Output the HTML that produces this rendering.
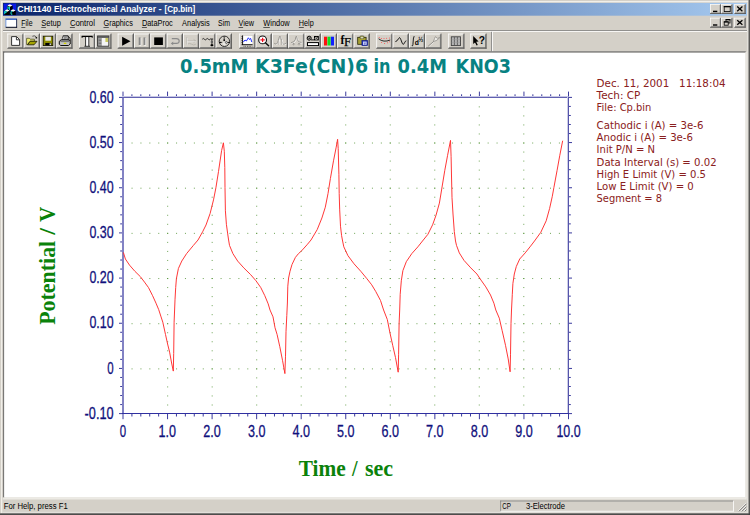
<!DOCTYPE html>
<html><head><meta charset="utf-8"><title>CHI1140 Electrochemical Analyzer - [Cp.bin]</title>
<style>html,body{margin:0;padding:0;background:#d4d0c8;overflow:hidden}svg{display:block}text{white-space:pre}</style>
</head><body>
<svg width="750" height="515" viewBox="0 0 750 515">
<defs>
<linearGradient id="tg" x1="0" y1="0" x2="1" y2="0"><stop offset="0" stop-color="#0a246a"/><stop offset="1" stop-color="#a6caf0"/></linearGradient>
</defs>
<rect x="0.00" y="0.00" width="750.00" height="515.00" fill="#d4d0c8" />
<rect x="1.00" y="1.00" width="747.40" height="1.30" fill="#f1efe9" />
<rect x="1.00" y="1.00" width="1.30" height="512.20" fill="#f1efe9" />
<rect x="746.90" y="2.30" width="1.70" height="510.80" fill="#e2e0da" />
<rect x="2.30" y="511.80" width="746.00" height="1.60" fill="#e2e0da" />
<rect x="748.55" y="0.00" width="0.70" height="515.00" fill="#585858" />
<rect x="0.00" y="513.30" width="750.00" height="0.85" fill="#565656" />
<rect x="749.20" y="0.00" width="0.80" height="515.00" fill="#404040" />
<rect x="0.00" y="514.10" width="750.00" height="0.90" fill="#404040" />
<rect x="3.00" y="2.90" width="744.00" height="12.80" fill="url(#tg)" />
<text x="17.30" y="12.10" font-size="9.5" fill="#ffffff" font-family="'Liberation Sans', sans-serif" font-weight="bold" text-anchor="start" textLength="34.20" lengthAdjust="spacingAndGlyphs" >CHI1140</text>
<text x="54.10" y="12.10" font-size="9.5" fill="#ffffff" font-family="'Liberation Sans', sans-serif" font-weight="bold" text-anchor="start" textLength="63.50" lengthAdjust="spacingAndGlyphs" >Electrochemical</text>
<text x="120.00" y="12.10" font-size="9.5" fill="#ffffff" font-family="'Liberation Sans', sans-serif" font-weight="bold" text-anchor="start" textLength="36.00" lengthAdjust="spacingAndGlyphs" >Analyzer</text>
<text x="158.40" y="12.10" font-size="9.5" fill="#ffffff" font-family="'Liberation Sans', sans-serif" font-weight="bold" text-anchor="start" textLength="3.20" lengthAdjust="spacingAndGlyphs" >-</text>
<text x="164.50" y="12.10" font-size="9.5" fill="#ffffff" font-family="'Liberation Sans', sans-serif" font-weight="bold" text-anchor="start" textLength="30.70" lengthAdjust="spacingAndGlyphs" >[Cp.bin]</text>
<rect x="3.70" y="3.60" width="12.40" height="11.60" fill="#0a1ae6" />
<path d="M9.9 4.4 L12.7 5.8 V9.2 L9.9 10.6 L7.1 9.2 V5.8 Z" fill="#000"/>
<path d="M7 9.4 L9.9 10.8 V15 H4.1 V10.8 Z" fill="#000"/><path d="M13 9.4 L15.9 10.8 V15 H10.1 V10.8 Z" fill="#000"/>
<path d="M9.9 4.2 L12.4 5.5 L9.9 6.8 L7.4 5.5 Z" fill="#fff"/><path d="M7.1 9.3 L9.5 10.5 L7.1 11.7 L4.7 10.5 Z" fill="#fff"/><path d="M13.1 9.3 L15.5 10.5 L13.1 11.7 L10.7 10.5 Z" fill="#fff"/>
<path d="M7.9 6.2 V9.4 M9.5 7 V10 M7.9 7.9 H9.5 M4.7 11 V14.2 M4.7 11.2 H6.2 V12.6 H4.7 M12.4 11.6 H11 V14.2 H12.4" fill="none" stroke="#10e8e0" stroke-width="0.9"/>
<rect x="710.00" y="4.20" width="11.10" height="9.80" fill="#d4d0c8" />
<rect x="710.00" y="4.20" width="11.10" height="0.70" fill="#ffffff" />
<rect x="710.00" y="4.20" width="0.70" height="9.80" fill="#ffffff" />
<rect x="719.70" y="4.90" width="0.70" height="8.40" fill="#808080" />
<rect x="710.70" y="12.60" width="9.70" height="0.70" fill="#808080" />
<rect x="720.40" y="4.20" width="0.70" height="9.80" fill="#404040" />
<rect x="710.00" y="13.30" width="11.10" height="0.70" fill="#404040" />
<rect x="721.10" y="4.20" width="11.30" height="9.80" fill="#d4d0c8" />
<rect x="721.10" y="4.20" width="11.30" height="0.70" fill="#ffffff" />
<rect x="721.10" y="4.20" width="0.70" height="9.80" fill="#ffffff" />
<rect x="731.00" y="4.90" width="0.70" height="8.40" fill="#808080" />
<rect x="721.80" y="12.60" width="9.90" height="0.70" fill="#808080" />
<rect x="731.70" y="4.20" width="0.70" height="9.80" fill="#404040" />
<rect x="721.10" y="13.30" width="11.30" height="0.70" fill="#404040" />
<rect x="734.30" y="4.20" width="11.30" height="9.80" fill="#d4d0c8" />
<rect x="734.30" y="4.20" width="11.30" height="0.70" fill="#ffffff" />
<rect x="734.30" y="4.20" width="0.70" height="9.80" fill="#ffffff" />
<rect x="744.20" y="4.90" width="0.70" height="8.40" fill="#808080" />
<rect x="735.00" y="12.60" width="9.90" height="0.70" fill="#808080" />
<rect x="744.90" y="4.20" width="0.70" height="9.80" fill="#404040" />
<rect x="734.30" y="13.30" width="11.30" height="0.70" fill="#404040" />
<rect x="713.00" y="10.70" width="4.30" height="1.40" fill="#000" />
<line x1="737.20" y1="6.60" x2="742.40" y2="11.20" stroke="#000" stroke-width="1.3" />
<line x1="737.20" y1="11.20" x2="742.40" y2="6.60" stroke="#000" stroke-width="1.3" />
<rect x="710.00" y="17.80" width="11.10" height="9.80" fill="#d4d0c8" />
<rect x="710.00" y="17.80" width="11.10" height="0.70" fill="#ffffff" />
<rect x="710.00" y="17.80" width="0.70" height="9.80" fill="#ffffff" />
<rect x="719.70" y="18.50" width="0.70" height="8.40" fill="#808080" />
<rect x="710.70" y="26.20" width="9.70" height="0.70" fill="#808080" />
<rect x="720.40" y="17.80" width="0.70" height="9.80" fill="#404040" />
<rect x="710.00" y="26.90" width="11.10" height="0.70" fill="#404040" />
<rect x="721.10" y="17.80" width="11.30" height="9.80" fill="#d4d0c8" />
<rect x="721.10" y="17.80" width="11.30" height="0.70" fill="#ffffff" />
<rect x="721.10" y="17.80" width="0.70" height="9.80" fill="#ffffff" />
<rect x="731.00" y="18.50" width="0.70" height="8.40" fill="#808080" />
<rect x="721.80" y="26.20" width="9.90" height="0.70" fill="#808080" />
<rect x="731.70" y="17.80" width="0.70" height="9.80" fill="#404040" />
<rect x="721.10" y="26.90" width="11.30" height="0.70" fill="#404040" />
<rect x="734.30" y="17.80" width="11.30" height="9.80" fill="#d4d0c8" />
<rect x="734.30" y="17.80" width="11.30" height="0.70" fill="#ffffff" />
<rect x="734.30" y="17.80" width="0.70" height="9.80" fill="#ffffff" />
<rect x="744.20" y="18.50" width="0.70" height="8.40" fill="#808080" />
<rect x="735.00" y="26.20" width="9.90" height="0.70" fill="#808080" />
<rect x="744.90" y="17.80" width="0.70" height="9.80" fill="#404040" />
<rect x="734.30" y="26.90" width="11.30" height="0.70" fill="#404040" />
<rect x="713.00" y="24.30" width="4.30" height="1.40" fill="#000" />
<line x1="737.20" y1="20.20" x2="742.40" y2="24.80" stroke="#000" stroke-width="1.3" />
<line x1="737.20" y1="24.80" x2="742.40" y2="20.20" stroke="#000" stroke-width="1.3" />
<rect x="724.2" y="6.4" width="6" height="5.2" fill="none" stroke="#000" stroke-width="0.8"/>
<rect x="723.80" y="6.00" width="6.80" height="1.30" fill="#000" />
<rect x="726" y="19.6" width="4" height="3.4" fill="none" stroke="#000" stroke-width="0.8"/>
<rect x="725.60" y="19.20" width="4.80" height="1.10" fill="#000" />
<rect x="724.2" y="21.8" width="4" height="3.4" fill="#d4d0c8" stroke="#000" stroke-width="0.8"/>
<rect x="723.80" y="21.40" width="4.80" height="1.10" fill="#000" />
<rect x="5.90" y="19.40" width="10.60" height="7.60" fill="#ffffff" />
<rect x="5.50" y="18.50" width="11.50" height="1.30" fill="#1c50c8" />
<rect x="5.50" y="19.60" width="0.80" height="7.60" fill="#5a8ae0" />
<rect x="16.20" y="19.20" width="0.90" height="8.40" fill="#18244a" />
<rect x="5.70" y="26.80" width="11.40" height="1.00" fill="#060c24" />
<text x="21.30" y="25.90" font-size="8.6" fill="#000000" font-family="'Liberation Sans', sans-serif" font-weight="normal" text-anchor="start" textLength="11.20" lengthAdjust="spacingAndGlyphs" >File</text>
<rect x="21.30" y="27.00" width="4.00" height="0.70" fill="#202020" />
<text x="41.30" y="25.90" font-size="8.6" fill="#000000" font-family="'Liberation Sans', sans-serif" font-weight="normal" text-anchor="start" textLength="19.50" lengthAdjust="spacingAndGlyphs" >Setup</text>
<rect x="41.30" y="27.00" width="4.60" height="0.70" fill="#202020" />
<text x="69.90" y="25.90" font-size="8.6" fill="#000000" font-family="'Liberation Sans', sans-serif" font-weight="normal" text-anchor="start" textLength="25.00" lengthAdjust="spacingAndGlyphs" >Control</text>
<rect x="69.90" y="27.00" width="5.00" height="0.70" fill="#202020" />
<text x="103.50" y="25.90" font-size="8.6" fill="#000000" font-family="'Liberation Sans', sans-serif" font-weight="normal" text-anchor="start" textLength="29.30" lengthAdjust="spacingAndGlyphs" >Graphics</text>
<rect x="103.50" y="27.00" width="5.30" height="0.70" fill="#202020" />
<text x="141.90" y="25.90" font-size="8.6" fill="#000000" font-family="'Liberation Sans', sans-serif" font-weight="normal" text-anchor="start" textLength="30.90" lengthAdjust="spacingAndGlyphs" >DataProc</text>
<rect x="141.90" y="27.00" width="5.00" height="0.70" fill="#202020" />
<text x="182.10" y="25.90" font-size="8.6" fill="#000000" font-family="'Liberation Sans', sans-serif" font-weight="normal" text-anchor="start" textLength="27.50" lengthAdjust="spacingAndGlyphs" >Analysis</text>
<text x="218.00" y="25.90" font-size="8.6" fill="#000000" font-family="'Liberation Sans', sans-serif" font-weight="normal" text-anchor="start" textLength="12.00" lengthAdjust="spacingAndGlyphs" >Sim</text>
<text x="238.50" y="25.90" font-size="8.6" fill="#000000" font-family="'Liberation Sans', sans-serif" font-weight="normal" text-anchor="start" textLength="15.50" lengthAdjust="spacingAndGlyphs" >View</text>
<rect x="238.50" y="27.00" width="4.60" height="0.70" fill="#202020" />
<text x="263.30" y="25.90" font-size="8.6" fill="#000000" font-family="'Liberation Sans', sans-serif" font-weight="normal" text-anchor="start" textLength="26.40" lengthAdjust="spacingAndGlyphs" >Window</text>
<rect x="263.30" y="27.00" width="6.50" height="0.70" fill="#202020" />
<text x="298.80" y="25.90" font-size="8.6" fill="#000000" font-family="'Liberation Sans', sans-serif" font-weight="normal" text-anchor="start" textLength="14.90" lengthAdjust="spacingAndGlyphs" >Help</text>
<rect x="298.80" y="27.00" width="5.00" height="0.70" fill="#202020" />
<rect x="3.00" y="30.20" width="744.00" height="0.80" fill="#808080" />
<rect x="3.00" y="31.00" width="744.00" height="0.80" fill="#ffffff" />
<rect x="491.20" y="31.80" width="0.80" height="19.60" fill="#808080" />
<rect x="492.00" y="31.80" width="0.80" height="19.60" fill="#ffffff" />
<rect x="7.40" y="33.60" width="15.40" height="0.80" fill="#ffffff" />
<rect x="7.40" y="33.60" width="0.80" height="14.30" fill="#ffffff" />
<rect x="22.00" y="34.40" width="0.80" height="13.50" fill="#808080" />
<rect x="8.20" y="47.10" width="14.60" height="0.80" fill="#808080" />
<rect x="22.75" y="33.60" width="0.75" height="15.00" fill="#404040" />
<rect x="7.40" y="47.85" width="16.10" height="0.75" fill="#404040" />
<rect x="23.73" y="33.60" width="15.40" height="0.80" fill="#ffffff" />
<rect x="23.73" y="33.60" width="0.80" height="14.30" fill="#ffffff" />
<rect x="38.33" y="34.40" width="0.80" height="13.50" fill="#808080" />
<rect x="24.53" y="47.10" width="14.60" height="0.80" fill="#808080" />
<rect x="39.08" y="33.60" width="0.75" height="15.00" fill="#404040" />
<rect x="23.73" y="47.85" width="16.10" height="0.75" fill="#404040" />
<rect x="40.06" y="33.60" width="15.40" height="0.80" fill="#ffffff" />
<rect x="40.06" y="33.60" width="0.80" height="14.30" fill="#ffffff" />
<rect x="54.66" y="34.40" width="0.80" height="13.50" fill="#808080" />
<rect x="40.86" y="47.10" width="14.60" height="0.80" fill="#808080" />
<rect x="55.41" y="33.60" width="0.75" height="15.00" fill="#404040" />
<rect x="40.06" y="47.85" width="16.10" height="0.75" fill="#404040" />
<rect x="56.39" y="33.60" width="15.40" height="0.80" fill="#ffffff" />
<rect x="56.39" y="33.60" width="0.80" height="14.30" fill="#ffffff" />
<rect x="70.99" y="34.40" width="0.80" height="13.50" fill="#808080" />
<rect x="57.19" y="47.10" width="14.60" height="0.80" fill="#808080" />
<rect x="71.74" y="33.60" width="0.75" height="15.00" fill="#404040" />
<rect x="56.39" y="47.85" width="16.10" height="0.75" fill="#404040" />
<rect x="79.00" y="33.60" width="15.40" height="0.80" fill="#ffffff" />
<rect x="79.00" y="33.60" width="0.80" height="14.30" fill="#ffffff" />
<rect x="93.60" y="34.40" width="0.80" height="13.50" fill="#808080" />
<rect x="79.80" y="47.10" width="14.60" height="0.80" fill="#808080" />
<rect x="94.35" y="33.60" width="0.75" height="15.00" fill="#404040" />
<rect x="79.00" y="47.85" width="16.10" height="0.75" fill="#404040" />
<rect x="95.33" y="33.60" width="15.40" height="0.80" fill="#ffffff" />
<rect x="95.33" y="33.60" width="0.80" height="14.30" fill="#ffffff" />
<rect x="109.93" y="34.40" width="0.80" height="13.50" fill="#808080" />
<rect x="96.13" y="47.10" width="14.60" height="0.80" fill="#808080" />
<rect x="110.68" y="33.60" width="0.75" height="15.00" fill="#404040" />
<rect x="95.33" y="47.85" width="16.10" height="0.75" fill="#404040" />
<rect x="117.70" y="33.60" width="15.40" height="0.80" fill="#ffffff" />
<rect x="117.70" y="33.60" width="0.80" height="14.30" fill="#ffffff" />
<rect x="132.30" y="34.40" width="0.80" height="13.50" fill="#808080" />
<rect x="118.50" y="47.10" width="14.60" height="0.80" fill="#808080" />
<rect x="133.05" y="33.60" width="0.75" height="15.00" fill="#404040" />
<rect x="117.70" y="47.85" width="16.10" height="0.75" fill="#404040" />
<rect x="134.03" y="33.60" width="15.40" height="0.80" fill="#ffffff" />
<rect x="134.03" y="33.60" width="0.80" height="14.30" fill="#ffffff" />
<rect x="148.63" y="34.40" width="0.80" height="13.50" fill="#808080" />
<rect x="134.83" y="47.10" width="14.60" height="0.80" fill="#808080" />
<rect x="149.38" y="33.60" width="0.75" height="15.00" fill="#404040" />
<rect x="134.03" y="47.85" width="16.10" height="0.75" fill="#404040" />
<rect x="150.36" y="33.60" width="15.40" height="0.80" fill="#ffffff" />
<rect x="150.36" y="33.60" width="0.80" height="14.30" fill="#ffffff" />
<rect x="164.96" y="34.40" width="0.80" height="13.50" fill="#808080" />
<rect x="151.16" y="47.10" width="14.60" height="0.80" fill="#808080" />
<rect x="165.71" y="33.60" width="0.75" height="15.00" fill="#404040" />
<rect x="150.36" y="47.85" width="16.10" height="0.75" fill="#404040" />
<rect x="166.69" y="33.60" width="15.40" height="0.80" fill="#ffffff" />
<rect x="166.69" y="33.60" width="0.80" height="14.30" fill="#ffffff" />
<rect x="181.29" y="34.40" width="0.80" height="13.50" fill="#808080" />
<rect x="167.49" y="47.10" width="14.60" height="0.80" fill="#808080" />
<rect x="182.04" y="33.60" width="0.75" height="15.00" fill="#404040" />
<rect x="166.69" y="47.85" width="16.10" height="0.75" fill="#404040" />
<rect x="183.02" y="33.60" width="15.40" height="0.80" fill="#ffffff" />
<rect x="183.02" y="33.60" width="0.80" height="14.30" fill="#ffffff" />
<rect x="197.62" y="34.40" width="0.80" height="13.50" fill="#808080" />
<rect x="183.82" y="47.10" width="14.60" height="0.80" fill="#808080" />
<rect x="198.37" y="33.60" width="0.75" height="15.00" fill="#404040" />
<rect x="183.02" y="47.85" width="16.10" height="0.75" fill="#404040" />
<rect x="199.35" y="33.60" width="15.40" height="0.80" fill="#ffffff" />
<rect x="199.35" y="33.60" width="0.80" height="14.30" fill="#ffffff" />
<rect x="213.95" y="34.40" width="0.80" height="13.50" fill="#808080" />
<rect x="200.15" y="47.10" width="14.60" height="0.80" fill="#808080" />
<rect x="214.70" y="33.60" width="0.75" height="15.00" fill="#404040" />
<rect x="199.35" y="47.85" width="16.10" height="0.75" fill="#404040" />
<rect x="215.68" y="33.60" width="15.40" height="0.80" fill="#ffffff" />
<rect x="215.68" y="33.60" width="0.80" height="14.30" fill="#ffffff" />
<rect x="230.28" y="34.40" width="0.80" height="13.50" fill="#808080" />
<rect x="216.48" y="47.10" width="14.60" height="0.80" fill="#808080" />
<rect x="231.03" y="33.60" width="0.75" height="15.00" fill="#404040" />
<rect x="215.68" y="47.85" width="16.10" height="0.75" fill="#404040" />
<rect x="239.30" y="33.60" width="15.40" height="0.80" fill="#ffffff" />
<rect x="239.30" y="33.60" width="0.80" height="14.30" fill="#ffffff" />
<rect x="253.90" y="34.40" width="0.80" height="13.50" fill="#808080" />
<rect x="240.10" y="47.10" width="14.60" height="0.80" fill="#808080" />
<rect x="254.65" y="33.60" width="0.75" height="15.00" fill="#404040" />
<rect x="239.30" y="47.85" width="16.10" height="0.75" fill="#404040" />
<rect x="255.63" y="33.60" width="15.40" height="0.80" fill="#ffffff" />
<rect x="255.63" y="33.60" width="0.80" height="14.30" fill="#ffffff" />
<rect x="270.23" y="34.40" width="0.80" height="13.50" fill="#808080" />
<rect x="256.43" y="47.10" width="14.60" height="0.80" fill="#808080" />
<rect x="270.98" y="33.60" width="0.75" height="15.00" fill="#404040" />
<rect x="255.63" y="47.85" width="16.10" height="0.75" fill="#404040" />
<rect x="271.96" y="33.60" width="15.40" height="0.80" fill="#ffffff" />
<rect x="271.96" y="33.60" width="0.80" height="14.30" fill="#ffffff" />
<rect x="286.56" y="34.40" width="0.80" height="13.50" fill="#808080" />
<rect x="272.76" y="47.10" width="14.60" height="0.80" fill="#808080" />
<rect x="287.31" y="33.60" width="0.75" height="15.00" fill="#404040" />
<rect x="271.96" y="47.85" width="16.10" height="0.75" fill="#404040" />
<rect x="288.29" y="33.60" width="15.40" height="0.80" fill="#ffffff" />
<rect x="288.29" y="33.60" width="0.80" height="14.30" fill="#ffffff" />
<rect x="302.89" y="34.40" width="0.80" height="13.50" fill="#808080" />
<rect x="289.09" y="47.10" width="14.60" height="0.80" fill="#808080" />
<rect x="303.64" y="33.60" width="0.75" height="15.00" fill="#404040" />
<rect x="288.29" y="47.85" width="16.10" height="0.75" fill="#404040" />
<rect x="304.62" y="33.60" width="15.40" height="0.80" fill="#ffffff" />
<rect x="304.62" y="33.60" width="0.80" height="14.30" fill="#ffffff" />
<rect x="319.22" y="34.40" width="0.80" height="13.50" fill="#808080" />
<rect x="305.42" y="47.10" width="14.60" height="0.80" fill="#808080" />
<rect x="319.97" y="33.60" width="0.75" height="15.00" fill="#404040" />
<rect x="304.62" y="47.85" width="16.10" height="0.75" fill="#404040" />
<rect x="320.95" y="33.60" width="15.40" height="0.80" fill="#ffffff" />
<rect x="320.95" y="33.60" width="0.80" height="14.30" fill="#ffffff" />
<rect x="335.55" y="34.40" width="0.80" height="13.50" fill="#808080" />
<rect x="321.75" y="47.10" width="14.60" height="0.80" fill="#808080" />
<rect x="336.30" y="33.60" width="0.75" height="15.00" fill="#404040" />
<rect x="320.95" y="47.85" width="16.10" height="0.75" fill="#404040" />
<rect x="337.28" y="33.60" width="15.40" height="0.80" fill="#ffffff" />
<rect x="337.28" y="33.60" width="0.80" height="14.30" fill="#ffffff" />
<rect x="351.88" y="34.40" width="0.80" height="13.50" fill="#808080" />
<rect x="338.08" y="47.10" width="14.60" height="0.80" fill="#808080" />
<rect x="352.63" y="33.60" width="0.75" height="15.00" fill="#404040" />
<rect x="337.28" y="47.85" width="16.10" height="0.75" fill="#404040" />
<rect x="353.61" y="33.60" width="15.40" height="0.80" fill="#ffffff" />
<rect x="353.61" y="33.60" width="0.80" height="14.30" fill="#ffffff" />
<rect x="368.21" y="34.40" width="0.80" height="13.50" fill="#808080" />
<rect x="354.41" y="47.10" width="14.60" height="0.80" fill="#808080" />
<rect x="368.96" y="33.60" width="0.75" height="15.00" fill="#404040" />
<rect x="353.61" y="47.85" width="16.10" height="0.75" fill="#404040" />
<rect x="376.30" y="33.60" width="15.40" height="0.80" fill="#ffffff" />
<rect x="376.30" y="33.60" width="0.80" height="14.30" fill="#ffffff" />
<rect x="390.90" y="34.40" width="0.80" height="13.50" fill="#808080" />
<rect x="377.10" y="47.10" width="14.60" height="0.80" fill="#808080" />
<rect x="391.65" y="33.60" width="0.75" height="15.00" fill="#404040" />
<rect x="376.30" y="47.85" width="16.10" height="0.75" fill="#404040" />
<rect x="392.63" y="33.60" width="15.40" height="0.80" fill="#ffffff" />
<rect x="392.63" y="33.60" width="0.80" height="14.30" fill="#ffffff" />
<rect x="407.23" y="34.40" width="0.80" height="13.50" fill="#808080" />
<rect x="393.43" y="47.10" width="14.60" height="0.80" fill="#808080" />
<rect x="407.98" y="33.60" width="0.75" height="15.00" fill="#404040" />
<rect x="392.63" y="47.85" width="16.10" height="0.75" fill="#404040" />
<rect x="408.96" y="33.60" width="15.40" height="0.80" fill="#ffffff" />
<rect x="408.96" y="33.60" width="0.80" height="14.30" fill="#ffffff" />
<rect x="423.56" y="34.40" width="0.80" height="13.50" fill="#808080" />
<rect x="409.76" y="47.10" width="14.60" height="0.80" fill="#808080" />
<rect x="424.31" y="33.60" width="0.75" height="15.00" fill="#404040" />
<rect x="408.96" y="47.85" width="16.10" height="0.75" fill="#404040" />
<rect x="425.29" y="33.60" width="15.40" height="0.80" fill="#ffffff" />
<rect x="425.29" y="33.60" width="0.80" height="14.30" fill="#ffffff" />
<rect x="439.89" y="34.40" width="0.80" height="13.50" fill="#808080" />
<rect x="426.09" y="47.10" width="14.60" height="0.80" fill="#808080" />
<rect x="440.64" y="33.60" width="0.75" height="15.00" fill="#404040" />
<rect x="425.29" y="47.85" width="16.10" height="0.75" fill="#404040" />
<rect x="448.30" y="33.60" width="15.40" height="0.80" fill="#ffffff" />
<rect x="448.30" y="33.60" width="0.80" height="14.30" fill="#ffffff" />
<rect x="462.90" y="34.40" width="0.80" height="13.50" fill="#808080" />
<rect x="449.10" y="47.10" width="14.60" height="0.80" fill="#808080" />
<rect x="463.65" y="33.60" width="0.75" height="15.00" fill="#404040" />
<rect x="448.30" y="47.85" width="16.10" height="0.75" fill="#404040" />
<rect x="470.40" y="33.60" width="15.40" height="0.80" fill="#ffffff" />
<rect x="470.40" y="33.60" width="0.80" height="14.30" fill="#ffffff" />
<rect x="485.00" y="34.40" width="0.80" height="13.50" fill="#808080" />
<rect x="471.20" y="47.10" width="14.60" height="0.80" fill="#808080" />
<rect x="485.75" y="33.60" width="0.75" height="15.00" fill="#404040" />
<rect x="470.40" y="47.85" width="16.10" height="0.75" fill="#404040" />
<path d="M11.6 36.6 H16.6 L19.6 39.6 V45.4 H11.6 Z" fill="#fff" stroke="#202020" stroke-width="0.9" stroke-linejoin="round"/>
<path d="M16.4 36.8 V39.8 H19.4" fill="none" stroke="#202020" stroke-width="0.9"/>
<path d="M26.6 38.3 H29.4 L30.2 39.2 H34.4 V41.2 H30 L27.4 44.6 H26.6 Z" fill="#ecec6c" stroke="#404020" stroke-width="0.7" stroke-linejoin="round"/>
<path d="M27.5 44.8 L30.2 41.3 H37 L34 44.8 Z" fill="#a4a400" stroke="#181800" stroke-width="0.8" stroke-linejoin="round"/>
<path d="M32.4 36.3 Q34.4 35 36.2 36.9" fill="none" stroke="#404040" stroke-width="0.8"/><rect x="35.6" y="37" width="1.5" height="1.5" fill="#101010"/>
<rect x="43.2" y="36.2" width="9.6" height="9.4" fill="#8c8c00" stroke="#101000" stroke-width="0.8"/>
<rect x="45.3" y="36.8" width="5.6" height="3.9" fill="#e8e8ea"/>
<rect x="45.3" y="43" width="6" height="2.3" fill="#000"/><rect x="49.6" y="43.4" width="1.3" height="1.7" fill="#e8e8e8"/>
<path d="M62 39.8 L63.2 35.6 H68 L69 39.8 Z" fill="#8e8e8e" stroke="#303030" stroke-width="0.8" stroke-linejoin="round"/>
<path d="M63 38.8 L63.6 37.4 M66.4 38.4 L67.2 37.6" stroke="#f0f0f0" stroke-width="0.9"/>
<path d="M59.3 41.3 L61 39.9 H68.8 L70.2 41.6 V44 L68.6 45.5 H60.7 L59.3 44.2 Z" fill="#c2c2c2" stroke="#101010" stroke-width="1" stroke-linejoin="round"/>
<path d="M60.4 41.6 H69" stroke="#505050" stroke-width="0.7"/><rect x="63.8" y="42.7" width="2.5" height="1.3" fill="#d4d400"/>
<path d="M68.2 36.2 Q70.8 38 70.4 41.4" fill="none" stroke="#101010" stroke-width="0.9"/>
<rect x="85.6" y="36.8" width="3.2" height="9.4" fill="#fff"/>
<path d="M81.7 36.4 H92.6" stroke="#000" stroke-width="1.3"/><path d="M82.1 36.4 V37.9 M92.2 36.4 V37.9" stroke="#000" stroke-width="0.9"/>
<path d="M85.6 36.8 V46.2 M88.8 36.8 V46.2" stroke="#101010" stroke-width="0.85"/><path d="M84.4 46.3 H90" stroke="#101010" stroke-width="0.8"/>
<rect x="97.6" y="36" width="11.2" height="10.2" fill="#9a9a9a" stroke="#303030" stroke-width="0.9"/>
<rect x="98" y="36.3" width="10.4" height="1.4" fill="#505050"/>
<rect x="101.8" y="38" width="6.4" height="7.6" fill="#f4f4f4"/><rect x="105.4" y="38" width="2.6" height="4" fill="#c8c860"/>
<path d="M98.6 40.2 H101.2 M98.6 43.2 H101.2" stroke="#606060" stroke-width="0.9"/>
<path d="M122.1 36.7 L130.5 41.2 L122.1 45.7 Z" fill="#000"/>
<rect x="139.4" y="38" width="1.9" height="7.6" fill="#fff"/><rect x="144.2" y="38" width="1.9" height="7.6" fill="#fff"/>
<rect x="138.7" y="37.4" width="1.9" height="7.6" fill="#888"/><rect x="143.5" y="37.4" width="1.9" height="7.6" fill="#888"/>
<rect x="154.2" y="37.4" width="8.7" height="7.6" fill="#000"/>
<path d="M171.8 38.6 H176.4 Q179.2 38.6 179.2 41 Q179.2 43.4 176.4 43.4 H172.4" fill="none" stroke="#8a8a8a" stroke-width="1.1"/>
<path d="M170.8 43.4 L173.2 41.6 V45.2 Z" fill="#8a8a8a"/>
<g stroke="#b4b1aa" fill="none" stroke-width="0.8"><path d="M186.6 37.4 V44.6 M186.6 41 H195.6 M193.6 39.4 L195.8 41 L193.6 42.6"/><path d="M187.4 44.2 Q189.5 42.6 191.6 44.2 T195.8 44.2" /></g>
<g stroke="#ffffff" fill="none" stroke-width="0.6" opacity="0.8"><path d="M187.2 38 V45.2 M187.2 41.7 H196.2"/></g>
<path d="M202.3 39.2 Q203.3 37.8 204.3 39.2 T206.3 39.2 T208.3 39.2 T210.2 39 H213.2 M211.9 39 V45.6" fill="none" stroke="#181818" stroke-width="0.9"/>
<rect x="210.8" y="41" width="2.2" height="1.9" fill="#606060"/><rect x="210.5" y="44.2" width="2.8" height="2" rx="0.8" fill="#000"/>
<circle cx="224.4" cy="41.3" r="5.2" fill="none" stroke="#202020" stroke-width="0.9"/>
<circle cx="224.4" cy="43.6" r="1.7" fill="#eceae6"/>
<path d="M224.2 36.2 V40.2 M219.4 42.4 H222.2 M227.3 42.4 H229.6" stroke="#181818" stroke-width="0.8" fill="none"/>
<circle cx="224.2" cy="40.2" r="0.85" fill="#000"/><circle cx="220.1" cy="42.4" r="0.75" fill="#000"/><circle cx="229" cy="42.4" r="0.6" fill="#000"/>
<circle cx="226.3" cy="42.5" r="0.95" fill="#fff" stroke="#101010" stroke-width="0.6"/>
<rect x="242.6" y="35.8" width="9.8" height="8.8" fill="#fff"/>
<path d="M242.6 35.4 V45 M241.6 44.7 H252.6" stroke="#000" stroke-width="0.9"/>
<path d="M241.4 36.6 H242.6 M241.4 38.6 H242.6 M241.4 40.6 H242.6 M241.4 42.6 H242.6" stroke="#000" stroke-width="0.6"/>
<path d="M243.6 46.3 H252.4" stroke="#303030" stroke-width="0.9" stroke-dasharray="0.8 0.9"/>
<path d="M243.4 42 L245 40 L246.4 41 L248.4 37.8 L249.6 39.6 L250.6 38.4 L251.8 42" fill="none" stroke="#2030ff" stroke-width="1"/>
<circle cx="262.6" cy="39.9" r="3.9" fill="#fff" stroke="#101010" stroke-width="1.1"/>
<path d="M260.4 39.9 H264.8 M262.6 37.7 V42.1" stroke="#f01020" stroke-width="1.2"/>
<path d="M265.4 42.8 L268.6 45.8" stroke="#101010" stroke-width="1.5" stroke-linecap="round"/>
<path d="M275 44.1 Q277.6 44.1 278.5 40.2 Q279.4 36.3 279.9 36.3 Q280.5 36.3 281.4 40.2 Q282.3 44.1 285.7 43.6" fill="none" stroke="#ffffff" stroke-width="0.8" transform="translate(0.7,0.6)"/>
<path d="M274.2 43.2 Q275 44.2 276.4 44 Q277.8 43.4 278.5 40.2 Q279.4 36.2 279.9 36.2 Q280.5 36.2 281.4 40.2 Q282.1 43.4 283.6 44 Q285 44.2 285.9 43.3" fill="none" stroke="#8e8b86" stroke-width="0.85"/>
<path d="M278.4 45 V39.6 M281.5 45 V39.6" stroke="#9a9791" stroke-width="0.7"/><path d="M279.1 45 V40 M282.2 45 V40" stroke="#ffffff" stroke-width="0.6"/>
<path d="M291.1 42.6 Q294.6 42.4 295.3 39.6 Q295.9 36.2 296.3 36.2 Q296.7 36.2 297.3 39.6 Q298 42.4 301.6 42.6" fill="none" stroke="#ffffff" stroke-width="0.8" transform="translate(0.7,0.6)"/>
<path d="M291.1 42.6 Q294.6 42.4 295.3 39.6 Q295.9 36.2 296.3 36.2 Q296.7 36.2 297.3 39.6 Q298 42.4 301.6 42.6" fill="none" stroke="#8e8b86" stroke-width="0.85"/>
<path d="M293.6 45.4 V43 M299 45.4 V43 M292.5 44.5 L293.6 43.1 L294.7 44.5 M297.9 44.5 L299 43.1 L300.1 44.5" fill="none" stroke="#96938d" stroke-width="0.75"/>
<circle cx="309.2" cy="38.2" r="2" fill="#b8b5ae" stroke="#000" stroke-width="1"/><circle cx="309.2" cy="38.2" r="0.7" fill="#000"/>
<rect x="314" y="36" width="4.8" height="4.4" fill="#000"/><circle cx="316.3" cy="38.2" r="1.5" fill="#c8c5be"/><circle cx="316.3" cy="38.2" r="0.6" fill="#000"/>
<path d="M311 39.9 H314.2" stroke="#000" stroke-width="0.9"/>
<rect x="307.5" y="42.6" width="11" height="3" fill="#fff" stroke="#000" stroke-width="1"/>
<rect x="324" y="36.7" width="3.2" height="8.8" fill="#ff1010"/><rect x="327.5" y="36.7" width="3.1" height="8.8" fill="#10e020"/><rect x="330.9" y="36.7" width="3.1" height="8.8" fill="#1020ff"/>
<text x="340.5" y="43.8" font-size="11.6" font-weight="bold" fill="#000" font-family="'Liberation Serif', serif">f</text>
<text x="344.1" y="46.2" font-size="12.7" fill="#000" stroke="#000" stroke-width="0.25" font-family="'Liberation Serif', serif">F</text>
<rect x="357.7" y="37.3" width="8.4" height="7" fill="#a6a034" stroke="#282808" stroke-width="0.8"/>
<rect x="360" y="36" width="3.9" height="2.4" rx="0.8" fill="#c0c070" stroke="#404020" stroke-width="0.7"/><rect x="360.8" y="37.4" width="2.4" height="0.9" fill="#f0f0f0"/>
<rect x="361.9" y="40.4" width="5.8" height="5.2" fill="#2434b4" stroke="#101880" stroke-width="0.6"/>
<rect x="363" y="41.6" width="3.6" height="3.2" fill="#e0e4fa"/><path d="M363.6 43 H366 M364.8 43 V44.8" stroke="#3040c0" stroke-width="0.6"/>
<path d="M378.6 38.8 Q383.6 42.8 390.2 40" fill="none" stroke="#181818" stroke-width="0.9"/>
<g fill="#ff4848"><circle cx="379.2" cy="37.4" r="0.5"/><circle cx="381.4" cy="38.4" r="0.5"/><circle cx="384" cy="38.6" r="0.5"/><circle cx="386.6" cy="38.2" r="0.5"/><circle cx="389.4" cy="38" r="0.5"/><circle cx="381.6" cy="42.4" r="0.5"/><circle cx="384.6" cy="43.4" r="0.5"/><circle cx="387.6" cy="42.8" r="0.5"/><circle cx="389.6" cy="41.8" r="0.5"/></g>
<path d="M395.4 41.6 Q397.2 41.4 398.5 38.6 Q399.6 36.2 400.7 39.2 L402.4 43.6 Q403.4 45.6 404.5 42.8 Q405.2 41 406.3 40.8" fill="none" stroke="#101010" stroke-width="0.95"/>
<path d="M414.6 36.9 Q413.6 36 413.5 37.6 L412.9 44.8 Q412.8 46.4 411.8 45.6" fill="none" stroke="#000" stroke-width="0.85"/>
<text x="414.7" y="44.6" font-size="6.8" font-weight="bold" fill="#000" font-family="'Liberation Sans', sans-serif">d</text>
<text x="418.2" y="42" font-size="6.6" font-weight="bold" fill="#000" font-family="'Liberation Sans', sans-serif" textLength="5" lengthAdjust="spacingAndGlyphs">½</text>
<path d="M428.8 46.4 L434.6 41.4" stroke="#ffffff" stroke-width="0.7"/>
<path d="M428.2 46.2 L434 41.2" stroke="#84827c" stroke-width="0.85"/>
<path d="M433.4 41.7 Q434.6 38 435.4 36.7 Q437 39.5 439.8 37.6 Q437.2 40.8 433.4 41.7 Z" fill="#efeeea" stroke="#8c8a84" stroke-width="0.75" stroke-linejoin="round"/>
<rect x="451.3" y="36.8" width="9.2" height="8.8" fill="#b4b4b4" stroke="#404040" stroke-width="0.9"/>
<path d="M454.4 37 V45.4 M457.4 37 V45.4" stroke="#505050" stroke-width="0.8"/><path d="M451.6 39.6 H460.2 M451.6 42.4 H460.2" stroke="#9a9a9a" stroke-width="0.5"/>
<path d="M473.2 36 V44 L475 42.4 L476.6 45.6 L477.8 45 L476.2 41.8 L478.6 41.6 Z" fill="#000"/>
<text x="478.8" y="44.2" font-size="10.2" font-weight="bold" fill="#000" font-family="'Liberation Sans', sans-serif">?</text>
<rect x="2.90" y="51.20" width="742.90" height="0.70" fill="#808080" />
<rect x="2.90" y="51.20" width="0.70" height="446.40" fill="#808080" />
<rect x="3.60" y="51.90" width="742.20" height="0.75" fill="#404040" />
<rect x="3.60" y="51.90" width="0.65" height="445.60" fill="#404040" />
<rect x="4.20" y="52.60" width="741.20" height="444.90" fill="#ffffff" />
<rect x="745.40" y="52.00" width="1.30" height="446.00" fill="#f0eeea" />
<rect x="3.00" y="497.50" width="743.70" height="2.00" fill="#eceae4" />
<text x="3.70" y="509.10" font-size="8.5" fill="#000000" font-family="'Liberation Sans', sans-serif" font-weight="normal" text-anchor="start" textLength="64.00" lengthAdjust="spacingAndGlyphs" >For Help, press F1</text>
<rect x="500.30" y="500.60" width="233.40" height="0.80" fill="#808080" />
<rect x="500.30" y="500.60" width="0.80" height="10.80" fill="#808080" />
<rect x="500.30" y="510.80" width="233.40" height="0.80" fill="#ffffff" />
<rect x="733.00" y="500.60" width="0.80" height="11.00" fill="#ffffff" />
<text x="502.30" y="509.10" font-size="8.5" fill="#000000" font-family="'Liberation Sans', sans-serif" font-weight="normal" text-anchor="start" textLength="8.60" lengthAdjust="spacingAndGlyphs" >CP</text>
<text x="526.00" y="509.10" font-size="8.5" fill="#000000" font-family="'Liberation Sans', sans-serif" font-weight="normal" text-anchor="start" textLength="39.00" lengthAdjust="spacingAndGlyphs" >3-Electrode</text>
<line x1="738.10" y1="511.20" x2="746.20" y2="503.10" stroke="#ffffff" stroke-width="0.8" />
<line x1="738.90" y1="511.30" x2="746.50" y2="503.70" stroke="#7c7c7c" stroke-width="1.0" />
<line x1="741.00" y1="511.20" x2="746.20" y2="506.00" stroke="#ffffff" stroke-width="0.8" />
<line x1="741.80" y1="511.30" x2="746.50" y2="506.60" stroke="#7c7c7c" stroke-width="1.0" />
<line x1="743.90" y1="511.20" x2="746.20" y2="508.90" stroke="#ffffff" stroke-width="0.8" />
<line x1="744.70" y1="511.30" x2="746.50" y2="509.50" stroke="#7c7c7c" stroke-width="1.0" />
<g stroke="#458a25" stroke-width="1" stroke-opacity="0.78" fill="none">
<line x1="131.55" y1="143.02" x2="559.95" y2="143.02" stroke-dasharray="1 7.903"/>
<line x1="131.55" y1="188.19" x2="559.95" y2="188.19" stroke-dasharray="1 7.903"/>
<line x1="131.55" y1="233.36" x2="559.95" y2="233.36" stroke-dasharray="1 7.903"/>
<line x1="131.55" y1="278.54" x2="559.95" y2="278.54" stroke-dasharray="1 7.903"/>
<line x1="131.55" y1="323.71" x2="559.95" y2="323.71" stroke-dasharray="1 7.903"/>
<line x1="131.55" y1="368.88" x2="559.95" y2="368.88" stroke-dasharray="1 7.903"/>
<line x1="167.67" y1="106.38" x2="167.67" y2="405.52" stroke-dasharray="1 8.034"/>
<line x1="212.18" y1="106.38" x2="212.18" y2="405.52" stroke-dasharray="1 8.034"/>
<line x1="256.70" y1="106.38" x2="256.70" y2="405.52" stroke-dasharray="1 8.034"/>
<line x1="301.21" y1="106.38" x2="301.21" y2="405.52" stroke-dasharray="1 8.034"/>
<line x1="345.73" y1="106.38" x2="345.73" y2="405.52" stroke-dasharray="1 8.034"/>
<line x1="390.24" y1="106.38" x2="390.24" y2="405.52" stroke-dasharray="1 8.034"/>
<line x1="434.75" y1="106.38" x2="434.75" y2="405.52" stroke-dasharray="1 8.034"/>
<line x1="479.27" y1="106.38" x2="479.27" y2="405.52" stroke-dasharray="1 8.034"/>
<line x1="523.79" y1="106.38" x2="523.79" y2="405.52" stroke-dasharray="1 8.034"/>
</g>
<g stroke="#101088" stroke-width="1" opacity="0.82">
<line x1="119.00" y1="97.40" x2="122.5" y2="97.40"/>
<line x1="568.5" y1="97.40" x2="572.00" y2="97.40"/>
<line x1="120.20" y1="106.43" x2="122.5" y2="106.43"/>
<line x1="568.5" y1="106.43" x2="570.80" y2="106.43"/>
<line x1="120.20" y1="115.47" x2="122.5" y2="115.47"/>
<line x1="568.5" y1="115.47" x2="570.80" y2="115.47"/>
<line x1="120.20" y1="124.50" x2="122.5" y2="124.50"/>
<line x1="568.5" y1="124.50" x2="570.80" y2="124.50"/>
<line x1="120.20" y1="133.54" x2="122.5" y2="133.54"/>
<line x1="568.5" y1="133.54" x2="570.80" y2="133.54"/>
<line x1="119.00" y1="142.57" x2="122.5" y2="142.57"/>
<line x1="568.5" y1="142.57" x2="572.00" y2="142.57"/>
<line x1="120.20" y1="151.61" x2="122.5" y2="151.61"/>
<line x1="568.5" y1="151.61" x2="570.80" y2="151.61"/>
<line x1="120.20" y1="160.64" x2="122.5" y2="160.64"/>
<line x1="568.5" y1="160.64" x2="570.80" y2="160.64"/>
<line x1="120.20" y1="169.67" x2="122.5" y2="169.67"/>
<line x1="568.5" y1="169.67" x2="570.80" y2="169.67"/>
<line x1="120.20" y1="178.71" x2="122.5" y2="178.71"/>
<line x1="568.5" y1="178.71" x2="570.80" y2="178.71"/>
<line x1="119.00" y1="187.74" x2="122.5" y2="187.74"/>
<line x1="568.5" y1="187.74" x2="572.00" y2="187.74"/>
<line x1="120.20" y1="196.78" x2="122.5" y2="196.78"/>
<line x1="568.5" y1="196.78" x2="570.80" y2="196.78"/>
<line x1="120.20" y1="205.81" x2="122.5" y2="205.81"/>
<line x1="568.5" y1="205.81" x2="570.80" y2="205.81"/>
<line x1="120.20" y1="214.85" x2="122.5" y2="214.85"/>
<line x1="568.5" y1="214.85" x2="570.80" y2="214.85"/>
<line x1="120.20" y1="223.88" x2="122.5" y2="223.88"/>
<line x1="568.5" y1="223.88" x2="570.80" y2="223.88"/>
<line x1="119.00" y1="232.91" x2="122.5" y2="232.91"/>
<line x1="568.5" y1="232.91" x2="572.00" y2="232.91"/>
<line x1="120.20" y1="241.95" x2="122.5" y2="241.95"/>
<line x1="568.5" y1="241.95" x2="570.80" y2="241.95"/>
<line x1="120.20" y1="250.98" x2="122.5" y2="250.98"/>
<line x1="568.5" y1="250.98" x2="570.80" y2="250.98"/>
<line x1="120.20" y1="260.02" x2="122.5" y2="260.02"/>
<line x1="568.5" y1="260.02" x2="570.80" y2="260.02"/>
<line x1="120.20" y1="269.05" x2="122.5" y2="269.05"/>
<line x1="568.5" y1="269.05" x2="570.80" y2="269.05"/>
<line x1="119.00" y1="278.09" x2="122.5" y2="278.09"/>
<line x1="568.5" y1="278.09" x2="572.00" y2="278.09"/>
<line x1="120.20" y1="287.12" x2="122.5" y2="287.12"/>
<line x1="568.5" y1="287.12" x2="570.80" y2="287.12"/>
<line x1="120.20" y1="296.15" x2="122.5" y2="296.15"/>
<line x1="568.5" y1="296.15" x2="570.80" y2="296.15"/>
<line x1="120.20" y1="305.19" x2="122.5" y2="305.19"/>
<line x1="568.5" y1="305.19" x2="570.80" y2="305.19"/>
<line x1="120.20" y1="314.22" x2="122.5" y2="314.22"/>
<line x1="568.5" y1="314.22" x2="570.80" y2="314.22"/>
<line x1="119.00" y1="323.26" x2="122.5" y2="323.26"/>
<line x1="568.5" y1="323.26" x2="572.00" y2="323.26"/>
<line x1="120.20" y1="332.29" x2="122.5" y2="332.29"/>
<line x1="568.5" y1="332.29" x2="570.80" y2="332.29"/>
<line x1="120.20" y1="341.33" x2="122.5" y2="341.33"/>
<line x1="568.5" y1="341.33" x2="570.80" y2="341.33"/>
<line x1="120.20" y1="350.36" x2="122.5" y2="350.36"/>
<line x1="568.5" y1="350.36" x2="570.80" y2="350.36"/>
<line x1="120.20" y1="359.39" x2="122.5" y2="359.39"/>
<line x1="568.5" y1="359.39" x2="570.80" y2="359.39"/>
<line x1="119.00" y1="368.43" x2="122.5" y2="368.43"/>
<line x1="568.5" y1="368.43" x2="572.00" y2="368.43"/>
<line x1="120.20" y1="377.46" x2="122.5" y2="377.46"/>
<line x1="568.5" y1="377.46" x2="570.80" y2="377.46"/>
<line x1="120.20" y1="386.50" x2="122.5" y2="386.50"/>
<line x1="568.5" y1="386.50" x2="570.80" y2="386.50"/>
<line x1="120.20" y1="395.53" x2="122.5" y2="395.53"/>
<line x1="568.5" y1="395.53" x2="570.80" y2="395.53"/>
<line x1="120.20" y1="404.57" x2="122.5" y2="404.57"/>
<line x1="568.5" y1="404.57" x2="570.80" y2="404.57"/>
<line x1="119.00" y1="413.60" x2="122.5" y2="413.60"/>
<line x1="568.5" y1="413.60" x2="572.00" y2="413.60"/>
<line x1="123.00" y1="91.60" x2="123.00" y2="97" />
<line x1="123.00" y1="413.5" x2="123.00" y2="419.20" />
<line x1="131.91" y1="94.30" x2="131.91" y2="97" />
<line x1="131.91" y1="413.5" x2="131.91" y2="416.50" />
<line x1="140.82" y1="94.30" x2="140.82" y2="97" />
<line x1="140.82" y1="413.5" x2="140.82" y2="416.50" />
<line x1="149.73" y1="94.30" x2="149.73" y2="97" />
<line x1="149.73" y1="413.5" x2="149.73" y2="416.50" />
<line x1="158.64" y1="94.30" x2="158.64" y2="97" />
<line x1="158.64" y1="413.5" x2="158.64" y2="416.50" />
<line x1="167.55" y1="91.60" x2="167.55" y2="97" />
<line x1="167.55" y1="413.5" x2="167.55" y2="419.20" />
<line x1="176.46" y1="94.30" x2="176.46" y2="97" />
<line x1="176.46" y1="413.5" x2="176.46" y2="416.50" />
<line x1="185.37" y1="94.30" x2="185.37" y2="97" />
<line x1="185.37" y1="413.5" x2="185.37" y2="416.50" />
<line x1="194.28" y1="94.30" x2="194.28" y2="97" />
<line x1="194.28" y1="413.5" x2="194.28" y2="416.50" />
<line x1="203.19" y1="94.30" x2="203.19" y2="97" />
<line x1="203.19" y1="413.5" x2="203.19" y2="416.50" />
<line x1="212.10" y1="91.60" x2="212.10" y2="97" />
<line x1="212.10" y1="413.5" x2="212.10" y2="419.20" />
<line x1="221.01" y1="94.30" x2="221.01" y2="97" />
<line x1="221.01" y1="413.5" x2="221.01" y2="416.50" />
<line x1="229.92" y1="94.30" x2="229.92" y2="97" />
<line x1="229.92" y1="413.5" x2="229.92" y2="416.50" />
<line x1="238.83" y1="94.30" x2="238.83" y2="97" />
<line x1="238.83" y1="413.5" x2="238.83" y2="416.50" />
<line x1="247.74" y1="94.30" x2="247.74" y2="97" />
<line x1="247.74" y1="413.5" x2="247.74" y2="416.50" />
<line x1="256.65" y1="91.60" x2="256.65" y2="97" />
<line x1="256.65" y1="413.5" x2="256.65" y2="419.20" />
<line x1="265.56" y1="94.30" x2="265.56" y2="97" />
<line x1="265.56" y1="413.5" x2="265.56" y2="416.50" />
<line x1="274.47" y1="94.30" x2="274.47" y2="97" />
<line x1="274.47" y1="413.5" x2="274.47" y2="416.50" />
<line x1="283.38" y1="94.30" x2="283.38" y2="97" />
<line x1="283.38" y1="413.5" x2="283.38" y2="416.50" />
<line x1="292.29" y1="94.30" x2="292.29" y2="97" />
<line x1="292.29" y1="413.5" x2="292.29" y2="416.50" />
<line x1="301.20" y1="91.60" x2="301.20" y2="97" />
<line x1="301.20" y1="413.5" x2="301.20" y2="419.20" />
<line x1="310.11" y1="94.30" x2="310.11" y2="97" />
<line x1="310.11" y1="413.5" x2="310.11" y2="416.50" />
<line x1="319.02" y1="94.30" x2="319.02" y2="97" />
<line x1="319.02" y1="413.5" x2="319.02" y2="416.50" />
<line x1="327.93" y1="94.30" x2="327.93" y2="97" />
<line x1="327.93" y1="413.5" x2="327.93" y2="416.50" />
<line x1="336.84" y1="94.30" x2="336.84" y2="97" />
<line x1="336.84" y1="413.5" x2="336.84" y2="416.50" />
<line x1="345.75" y1="91.60" x2="345.75" y2="97" />
<line x1="345.75" y1="413.5" x2="345.75" y2="419.20" />
<line x1="354.66" y1="94.30" x2="354.66" y2="97" />
<line x1="354.66" y1="413.5" x2="354.66" y2="416.50" />
<line x1="363.57" y1="94.30" x2="363.57" y2="97" />
<line x1="363.57" y1="413.5" x2="363.57" y2="416.50" />
<line x1="372.48" y1="94.30" x2="372.48" y2="97" />
<line x1="372.48" y1="413.5" x2="372.48" y2="416.50" />
<line x1="381.39" y1="94.30" x2="381.39" y2="97" />
<line x1="381.39" y1="413.5" x2="381.39" y2="416.50" />
<line x1="390.30" y1="91.60" x2="390.30" y2="97" />
<line x1="390.30" y1="413.5" x2="390.30" y2="419.20" />
<line x1="399.21" y1="94.30" x2="399.21" y2="97" />
<line x1="399.21" y1="413.5" x2="399.21" y2="416.50" />
<line x1="408.12" y1="94.30" x2="408.12" y2="97" />
<line x1="408.12" y1="413.5" x2="408.12" y2="416.50" />
<line x1="417.03" y1="94.30" x2="417.03" y2="97" />
<line x1="417.03" y1="413.5" x2="417.03" y2="416.50" />
<line x1="425.94" y1="94.30" x2="425.94" y2="97" />
<line x1="425.94" y1="413.5" x2="425.94" y2="416.50" />
<line x1="434.85" y1="91.60" x2="434.85" y2="97" />
<line x1="434.85" y1="413.5" x2="434.85" y2="419.20" />
<line x1="443.76" y1="94.30" x2="443.76" y2="97" />
<line x1="443.76" y1="413.5" x2="443.76" y2="416.50" />
<line x1="452.67" y1="94.30" x2="452.67" y2="97" />
<line x1="452.67" y1="413.5" x2="452.67" y2="416.50" />
<line x1="461.58" y1="94.30" x2="461.58" y2="97" />
<line x1="461.58" y1="413.5" x2="461.58" y2="416.50" />
<line x1="470.49" y1="94.30" x2="470.49" y2="97" />
<line x1="470.49" y1="413.5" x2="470.49" y2="416.50" />
<line x1="479.40" y1="91.60" x2="479.40" y2="97" />
<line x1="479.40" y1="413.5" x2="479.40" y2="419.20" />
<line x1="488.31" y1="94.30" x2="488.31" y2="97" />
<line x1="488.31" y1="413.5" x2="488.31" y2="416.50" />
<line x1="497.22" y1="94.30" x2="497.22" y2="97" />
<line x1="497.22" y1="413.5" x2="497.22" y2="416.50" />
<line x1="506.13" y1="94.30" x2="506.13" y2="97" />
<line x1="506.13" y1="413.5" x2="506.13" y2="416.50" />
<line x1="515.04" y1="94.30" x2="515.04" y2="97" />
<line x1="515.04" y1="413.5" x2="515.04" y2="416.50" />
<line x1="523.95" y1="91.60" x2="523.95" y2="97" />
<line x1="523.95" y1="413.5" x2="523.95" y2="419.20" />
<line x1="532.86" y1="94.30" x2="532.86" y2="97" />
<line x1="532.86" y1="413.5" x2="532.86" y2="416.50" />
<line x1="541.77" y1="94.30" x2="541.77" y2="97" />
<line x1="541.77" y1="413.5" x2="541.77" y2="416.50" />
<line x1="550.68" y1="94.30" x2="550.68" y2="97" />
<line x1="550.68" y1="413.5" x2="550.68" y2="416.50" />
<line x1="559.59" y1="94.30" x2="559.59" y2="97" />
<line x1="559.59" y1="413.5" x2="559.59" y2="416.50" />
<line x1="568.50" y1="91.60" x2="568.50" y2="97" />
<line x1="568.50" y1="413.5" x2="568.50" y2="419.20" />
</g>
<rect x="122" y="96.5" width="2" height="317.5" fill="#8282c4"/>
<rect x="122" y="96" width="447" height="1" fill="#c6c6e4"/>
<rect x="122" y="97" width="447" height="1" fill="#6060b0"/>
<rect x="567" y="96.5" width="1" height="317.5" fill="#cccce8"/>
<rect x="568" y="96.5" width="1" height="317.5" fill="#5555aa"/>
<rect x="122" y="413" width="447" height="1" fill="#3030a0"/>
<polyline points="123.5,252.8 125.4,259.0 129.5,265.1 134.9,271.3 140.4,276.7 144.5,282.1 148.5,287.6 152.6,295.7 156.0,303.2 158.7,309.6 160.8,316.1 162.8,322.2 165.5,334.5 167.6,344.0 169.6,352.1 171.6,363.0 173.3,371.1 173.7,353.5 174.1,322.2 174.6,310.0 175.0,299.8 175.7,287.6 176.4,278.7 178.4,268.5 181.8,261.0 186.6,253.6 193.4,245.4 198.0,240.0 202.6,231.8 206.0,225.0 210.1,213.5 213.5,199.9 215.9,187.8 218.5,171.5 221.6,150.6 223.4,142.8 224.3,151.3 224.8,167.6 225.0,187.7 225.4,210.8 226.4,224.3 227.7,233.9 228.6,240.0 229.5,245.4 232.9,253.6 237.7,261.1 243.8,267.9 250.6,274.6 256.0,280.8 260.8,287.6 264.8,295.7 268.2,303.9 270.0,310.0 273.0,316.8 275.0,327.7 277.1,334.5 279.8,346.7 282.5,360.3 284.9,373.6 285.5,356.2 286.0,331.7 286.8,315.4 287.4,303.0 287.8,286.2 288.6,278.0 290.0,271.3 292.0,264.5 295.4,257.4 298.4,253.7 301.5,250.9 307.0,244.8 311.0,240.0 317.2,229.6 321.9,218.0 325.3,207.2 328.0,193.6 330.4,178.5 333.5,160.8 336.2,147.2 337.6,139.3 338.2,148.5 338.9,174.3 339.2,193.6 339.7,209.9 340.5,226.2 341.6,235.7 342.6,241.0 343.8,246.8 347.9,255.6 354.0,263.8 360.8,271.3 366.9,278.7 371.7,284.8 375.8,291.6 380.5,300.5 383.6,310.0 387.3,319.5 390.0,333.1 392.7,345.3 395.5,357.6 398.2,372.2 398.6,354.8 399.1,323.6 399.7,310.0 400.2,294.3 401.3,280.8 402.9,270.6 406.3,261.7 411.8,253.6 417.9,246.8 422.5,241.0 427.9,234.3 432.6,224.8 436.0,215.3 439.4,203.1 441.4,191.0 444.8,170.3 447.6,155.3 450.5,140.4 451.1,156.7 451.5,176.0 452.0,197.7 453.0,214.0 454.3,231.6 455.5,241.0 456.5,245.4 459.3,252.9 464.0,260.4 470.8,267.9 476.9,274.0 481.0,280.1 485.8,286.9 490.5,295.0 493.9,303.2 495.8,310.0 499.3,318.2 502.1,330.4 505.5,345.3 508.2,358.9 510.1,371.8 510.5,354.8 511.0,323.6 511.5,310.0 512.3,294.3 512.9,283.5 514.3,274.0 516.3,266.5 519.7,259.0 525.2,252.9 530.6,246.1 534.5,241.0 540.8,232.3 546.2,220.8 549.6,208.5 552.3,196.3 553.9,187.5 557.1,170.3 559.8,155.3 562.6,141.1" fill="none" stroke="#ff2c2c" stroke-width="0.95" stroke-linejoin="round" stroke-linecap="round"/>
<text x="89.40" y="102.50" font-size="16.8" fill="#10107c" stroke="#10107c" stroke-width="0.3" font-family="'Liberation Sans', sans-serif" textLength="24.2" lengthAdjust="spacingAndGlyphs">0.60</text>
<text x="89.40" y="147.67" font-size="16.8" fill="#10107c" stroke="#10107c" stroke-width="0.3" font-family="'Liberation Sans', sans-serif" textLength="24.2" lengthAdjust="spacingAndGlyphs">0.50</text>
<text x="89.40" y="192.84" font-size="16.8" fill="#10107c" stroke="#10107c" stroke-width="0.3" font-family="'Liberation Sans', sans-serif" textLength="24.2" lengthAdjust="spacingAndGlyphs">0.40</text>
<text x="89.40" y="238.01" font-size="16.8" fill="#10107c" stroke="#10107c" stroke-width="0.3" font-family="'Liberation Sans', sans-serif" textLength="24.2" lengthAdjust="spacingAndGlyphs">0.30</text>
<text x="89.40" y="283.19" font-size="16.8" fill="#10107c" stroke="#10107c" stroke-width="0.3" font-family="'Liberation Sans', sans-serif" textLength="24.2" lengthAdjust="spacingAndGlyphs">0.20</text>
<text x="89.40" y="328.36" font-size="16.8" fill="#10107c" stroke="#10107c" stroke-width="0.3" font-family="'Liberation Sans', sans-serif" textLength="24.2" lengthAdjust="spacingAndGlyphs">0.10</text>
<text x="107.20" y="373.53" font-size="16.8" fill="#10107c" stroke="#10107c" stroke-width="0.3" font-family="'Liberation Sans', sans-serif" textLength="6.4" lengthAdjust="spacingAndGlyphs">0</text>
<text x="84.60" y="418.70" font-size="16.8" fill="#10107c" stroke="#10107c" stroke-width="0.3" font-family="'Liberation Sans', sans-serif" textLength="29" lengthAdjust="spacingAndGlyphs">-0.10</text>
<text x="119.80" y="436.9" font-size="16.8" fill="#10107c" stroke="#10107c" stroke-width="0.3" font-family="'Liberation Sans', sans-serif" textLength="6.4" lengthAdjust="spacingAndGlyphs">0</text>
<text x="158.40" y="436.9" font-size="16.8" fill="#10107c" stroke="#10107c" stroke-width="0.3" font-family="'Liberation Sans', sans-serif" textLength="17.5" lengthAdjust="spacingAndGlyphs">1.0</text>
<text x="203.35" y="436.9" font-size="16.8" fill="#10107c" stroke="#10107c" stroke-width="0.3" font-family="'Liberation Sans', sans-serif" textLength="17.5" lengthAdjust="spacingAndGlyphs">2.0</text>
<text x="247.90" y="436.9" font-size="16.8" fill="#10107c" stroke="#10107c" stroke-width="0.3" font-family="'Liberation Sans', sans-serif" textLength="17.5" lengthAdjust="spacingAndGlyphs">3.0</text>
<text x="292.45" y="436.9" font-size="16.8" fill="#10107c" stroke="#10107c" stroke-width="0.3" font-family="'Liberation Sans', sans-serif" textLength="17.5" lengthAdjust="spacingAndGlyphs">4.0</text>
<text x="337.00" y="436.9" font-size="16.8" fill="#10107c" stroke="#10107c" stroke-width="0.3" font-family="'Liberation Sans', sans-serif" textLength="17.5" lengthAdjust="spacingAndGlyphs">5.0</text>
<text x="381.55" y="436.9" font-size="16.8" fill="#10107c" stroke="#10107c" stroke-width="0.3" font-family="'Liberation Sans', sans-serif" textLength="17.5" lengthAdjust="spacingAndGlyphs">6.0</text>
<text x="426.10" y="436.9" font-size="16.8" fill="#10107c" stroke="#10107c" stroke-width="0.3" font-family="'Liberation Sans', sans-serif" textLength="17.5" lengthAdjust="spacingAndGlyphs">7.0</text>
<text x="470.65" y="436.9" font-size="16.8" fill="#10107c" stroke="#10107c" stroke-width="0.3" font-family="'Liberation Sans', sans-serif" textLength="17.5" lengthAdjust="spacingAndGlyphs">8.0</text>
<text x="515.20" y="436.9" font-size="16.8" fill="#10107c" stroke="#10107c" stroke-width="0.3" font-family="'Liberation Sans', sans-serif" textLength="17.5" lengthAdjust="spacingAndGlyphs">9.0</text>
<text x="556.40" y="436.9" font-size="16.8" fill="#10107c" stroke="#10107c" stroke-width="0.3" font-family="'Liberation Sans', sans-serif" textLength="24.2" lengthAdjust="spacingAndGlyphs">10.0</text>
<text x="180.1" y="72.9" font-size="19" fill="#078282" font-family="'DejaVu Sans', 'Liberation Sans', sans-serif" font-weight="bold" textLength="68.3" lengthAdjust="spacingAndGlyphs">0.5mM</text>
<text x="255.0" y="72.9" font-size="19" fill="#078282" font-family="'DejaVu Sans', 'Liberation Sans', sans-serif" font-weight="bold" textLength="113.2" lengthAdjust="spacingAndGlyphs">K3Fe(CN)6</text>
<text x="373.6" y="72.9" font-size="19" fill="#078282" font-family="'DejaVu Sans', 'Liberation Sans', sans-serif" font-weight="bold" textLength="17.0" lengthAdjust="spacingAndGlyphs">in</text>
<text x="397.6" y="72.9" font-size="19" fill="#078282" font-family="'DejaVu Sans', 'Liberation Sans', sans-serif" font-weight="bold" textLength="49.4" lengthAdjust="spacingAndGlyphs">0.4M</text>
<text x="455.6" y="72.9" font-size="19" fill="#078282" font-family="'DejaVu Sans', 'Liberation Sans', sans-serif" font-weight="bold" textLength="55.4" lengthAdjust="spacingAndGlyphs">KNO3</text>
<text x="298.7" y="475.9" font-size="23.5" fill="#0a820a" font-family="'Liberation Serif', serif" font-weight="bold" textLength="47.0" lengthAdjust="spacingAndGlyphs">Time</text>
<text x="351.9" y="475.9" font-size="23.5" fill="#0a820a" font-family="'Liberation Serif', serif" font-weight="bold" textLength="5.6" lengthAdjust="spacingAndGlyphs">/</text>
<text x="364.9" y="475.9" font-size="23.5" fill="#0a820a" font-family="'Liberation Serif', serif" font-weight="bold" textLength="28.1" lengthAdjust="spacingAndGlyphs">sec</text>
<g transform="translate(55.3,324.8) rotate(-90)" font-size="23.5" fill="#0a820a" font-family="'Liberation Serif', serif" font-weight="bold">
<text x="0" y="0" textLength="84.0" lengthAdjust="spacingAndGlyphs">Potential</text>
<text x="90.1" y="0" textLength="6.7" lengthAdjust="spacingAndGlyphs">/</text>
<text x="102.7" y="0" textLength="15.3" lengthAdjust="spacingAndGlyphs">V</text>
</g>
<text x="596.6" y="87.0" font-size="10.2" fill="#8a2020" font-family="'DejaVu Sans', 'Liberation Sans', sans-serif" textLength="129" lengthAdjust="spacingAndGlyphs" xml:space="preserve">Dec. 11, 2001   11:18:04</text>
<text x="596.6" y="99.2" font-size="10.2" fill="#8a2020" font-family="'DejaVu Sans', 'Liberation Sans', sans-serif" textLength="43.8" lengthAdjust="spacingAndGlyphs" xml:space="preserve">Tech: CP</text>
<text x="596.6" y="111.4" font-size="10.2" fill="#8a2020" font-family="'DejaVu Sans', 'Liberation Sans', sans-serif" textLength="54.8" lengthAdjust="spacingAndGlyphs" xml:space="preserve">File: Cp.bin</text>
<text x="596.6" y="129.0" font-size="10.2" fill="#8a2020" font-family="'DejaVu Sans', 'Liberation Sans', sans-serif" textLength="106.8" lengthAdjust="spacingAndGlyphs" xml:space="preserve">Cathodic i (A) = 3e-6</text>
<text x="596.6" y="141.2" font-size="10.2" fill="#8a2020" font-family="'DejaVu Sans', 'Liberation Sans', sans-serif" textLength="96.4" lengthAdjust="spacingAndGlyphs" xml:space="preserve">Anodic i (A) = 3e-6</text>
<text x="596.6" y="153.4" font-size="10.2" fill="#8a2020" font-family="'DejaVu Sans', 'Liberation Sans', sans-serif" textLength="58.4" lengthAdjust="spacingAndGlyphs" xml:space="preserve">Init P/N = N</text>
<text x="596.6" y="165.6" font-size="10.2" fill="#8a2020" font-family="'DejaVu Sans', 'Liberation Sans', sans-serif" textLength="120" lengthAdjust="spacingAndGlyphs" xml:space="preserve">Data Interval (s) = 0.02</text>
<text x="596.6" y="177.8" font-size="10.2" fill="#8a2020" font-family="'DejaVu Sans', 'Liberation Sans', sans-serif" textLength="109.4" lengthAdjust="spacingAndGlyphs" xml:space="preserve">High E Limit (V) = 0.5</text>
<text x="596.6" y="190.0" font-size="10.2" fill="#8a2020" font-family="'DejaVu Sans', 'Liberation Sans', sans-serif" textLength="97.2" lengthAdjust="spacingAndGlyphs" xml:space="preserve">Low E Limit (V) = 0</text>
<text x="596.6" y="202.2" font-size="10.2" fill="#8a2020" font-family="'DejaVu Sans', 'Liberation Sans', sans-serif" textLength="65.4" lengthAdjust="spacingAndGlyphs" xml:space="preserve">Segment = 8</text>
</svg>
</body></html>
